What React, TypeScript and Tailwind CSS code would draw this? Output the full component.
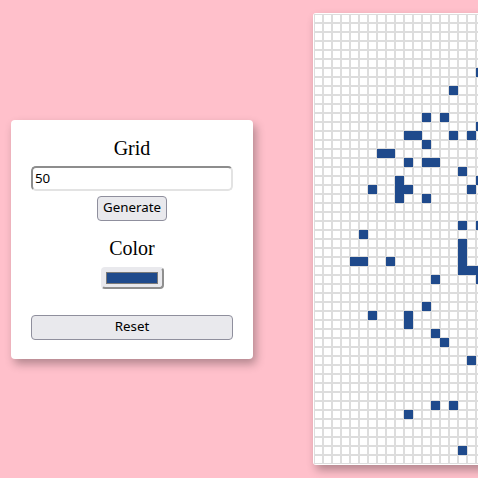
const SIZE = 50;

// cells that are painted, as "row-col"
const painted = new Set<string>([
	"6-18", "8-15", "11-12", "11-14", "12-18", "13-10", "13-11", "13-15", "13-17",
	"14-12", "15-7", "15-8", "16-10", "16-12", "16-13", "17-16", "18-9", "18-18",
	"19-6", "19-9", "19-10", "19-17", "20-9", "20-12", "23-16", "23-18", "24-5",
	"25-16", "26-16", "27-4", "27-5", "27-8", "27-16", "28-16", "28-17", "28-18",
	"29-13", "29-18", "32-12", "33-6", "33-10", "34-10", "35-13", "36-14", "38-17",
	"43-13", "43-15", "44-10", "48-16",
]);

const cells = Array.from({ length: SIZE * SIZE }, (_, i) => ({
	row: Math.floor(i / SIZE),
	col: i % SIZE,
}));

const Controls = () => {
	return (
		<div className="shrink-0 w-[242px] bg-white rounded-[4px] px-[20px] pt-[17px] pb-[19px] flex flex-col items-center shadow-[3px_5px_10px_rgba(0,0,0,0.3)]">
			<h2 className="font-['Liberation_Serif',serif] text-[20px] leading-[23px] text-black">
				Grid
			</h2>
			<input
				defaultValue="50"
				className="mt-[6px] w-full h-[25px] px-[2px] rounded-[5px] border-2 border-t-[#8d8d8d] border-l-[#8d8d8d] border-r-[#e3e3e3] border-b-[#e3e3e3] bg-white font-['Noto_Sans',sans-serif] text-[13.33px] text-black outline-none"
			/>
			<button className="mt-[5px] w-[70px] h-[25px] bg-[#e9e9ed] border border-[#8f8f9d] rounded-[4px] font-['Noto_Sans',sans-serif] text-[13.33px] leading-none text-black">
				Generate
			</button>
			<h2 className="mt-[16px] font-['Liberation_Serif',serif] text-[20px] leading-[23px] text-black">
				Color
			</h2>
			<button className="mt-[7px] w-[63px] h-[22px] flex items-center justify-center bg-[#e9e9ed] rounded-[4px] border-2 border-t-[#e9e9ed] border-l-[#e9e9ed] border-r-[#8f8f8f] border-b-[#8f8f8f]">
				<span className="block w-[52px] h-[12px] bg-[#1f4a8c] border border-[#7a7a7a]" />
			</button>
			<button className="mt-[26px] w-full h-[25px] bg-[#e9e9ed] border border-[#8f8f9d] rounded-[4px] font-['Noto_Sans',sans-serif] text-[13.33px] leading-none text-black">
				Reset
			</button>
		</div>
	);
};

const Board = () => {
	return (
		<div className="shrink-0 p-px bg-white rounded-[3px] shadow-[3px_5px_10px_rgba(0,0,0,0.3)]">
			<div className="grid grid-cols-[repeat(50,9px)] grid-rows-[repeat(50,9px)]">
				{cells.map(({ row, col }) =>
					painted.has(`${row}-${col}`) ? (
						<div key={`${row}-${col}`} className="w-[9px] h-[9px] bg-[#1f4a8c]" />
					) : (
						<div key={`${row}-${col}`} className="w-[9px] h-[9px] border border-[#dddddd] bg-white" />
					)
				)}
			</div>
		</div>
	);
};

const App = () => {
	return (
		<main className="w-screen h-screen overflow-hidden bg-[#ffc0cb] flex items-center gap-[60px] pl-[11px]">
			<Controls />
			<Board />
		</main>
	);
};

export default App;
